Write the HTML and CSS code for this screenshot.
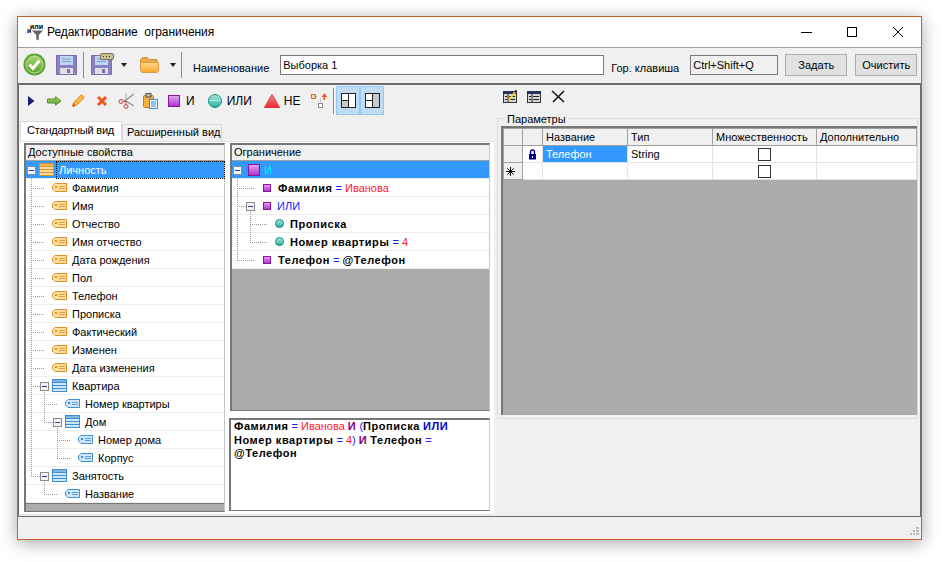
FILE: index.html
```html
<!DOCTYPE html>
<html lang="ru">
<head>
  <meta charset="UTF-8">
  <title>Редактирование ограничения</title>
  <link rel="stylesheet" href="styles.css">
</head>
<body>
<svg class="defs" width="0" height="0">
  <defs>
    <linearGradient id="gPurple" x1="0" y1="0" x2="0" y2="1"><stop offset="0" stop-color="#e6a6f2"/><stop offset="1" stop-color="#a92fd0"/></linearGradient>
    <linearGradient id="gTeal" x1="0" y1="0" x2="0" y2="1"><stop offset="0" stop-color="#a9e6da"/><stop offset=".5" stop-color="#6ccfc0"/><stop offset="1" stop-color="#27a89b"/></linearGradient>
    <linearGradient id="gRed" x1="0" y1="0" x2="0" y2="1"><stop offset="0" stop-color="#f7888c"/><stop offset="1" stop-color="#ee2a33"/></linearGradient>
    <linearGradient id="gGreen" x1="0" y1="0" x2="0" y2="1"><stop offset="0" stop-color="#a5d56a"/><stop offset="1" stop-color="#5da52f"/></linearGradient>
    <linearGradient id="gFolder" x1="0" y1="0" x2="0" y2="1"><stop offset="0" stop-color="#ffd98a"/><stop offset="1" stop-color="#f7a530"/></linearGradient>
    <symbol id="expander" viewBox="0 0 9 9"><rect x=".5" y=".5" width="8" height="8" fill="#f2f2f2" stroke="#8c8c8c"/><path d="M2 4.5h5" stroke="#23408f" fill="none"/></symbol>
    <symbol id="tableIcon" viewBox="0 0 15 13"><rect x=".5" y=".5" width="14" height="12" stroke="currentColor"/><path d="M1 3.5h13M1 6.5h13M1 9.5h13" stroke="currentColor" fill="none"/><rect x="1" y="1" width="13" height="2" fill="currentColor" opacity=".55"/></symbol>
    <symbol id="tagIcon" viewBox="0 0 15 9"><path d="M3 .5h11.5v8H3L.5 6V3z" stroke="currentColor"/><rect x="3" y="3" width="2" height="2" fill="currentColor"/><path d="M7 3.5h6M7 5.5h6" stroke="currentColor" opacity=".8" fill="none"/></symbol>
    <symbol id="squareSmall" viewBox="0 0 8 8"><rect x=".5" y=".5" width="7" height="7" fill="url(#gPurple)" stroke="#8d1398"/></symbol>
    <symbol id="squareBig" viewBox="0 0 12 12"><rect x=".5" y=".5" width="11" height="11" fill="url(#gPurple)" stroke="#8d1398"/></symbol>
    <symbol id="circleSmall" viewBox="0 0 9 9"><circle cx="4.5" cy="4.5" r="4" fill="url(#gTeal)" stroke="#178a80"/></symbol>
    <symbol id="floppy" viewBox="0 0 21 20"><path d="M.5.5h20v19H.5z" fill="#8b80c2" stroke="#7a6eb4"/><rect x="4" y="1" width="13" height="9" fill="#bcd6ef"/><path d="M6 4h9M6 6.5h9" stroke="#7f9fce" fill="none"/><rect x="4" y="13" width="13" height="6" fill="#e0e0e4"/><rect x="11" y="14" width="3" height="4" fill="#7a6eb4"/></symbol>
    <symbol id="paneIcon" viewBox="0 0 15 15"><rect x=".5" y=".5" width="14" height="14" fill="#fff" stroke="#222"/><path d="M7.5 1v13" stroke="#222" fill="none"/></symbol>
    <symbol id="gridIcon" viewBox="0 0 14 12"><rect x=".5" y=".5" width="13" height="11" fill="#d6d6d6" stroke="#333"/><rect x="0" y="0" width="14" height="3" fill="#27305e"/><path d="M2 5.5h2M2 8.5h2M6 5.5h6M6 8.5h6M5 3v8" stroke="#222" fill="none"/></symbol>
  </defs>
</svg>

<div class="window">
  <div class="titlebar">
    <svg class="title-icon" width="17" height="17" viewBox="0 0 17 17">
      <text x="3" y="5" class="tiny">или</text>
      <text x="0" y="9" class="tiny">и</text>
      <path d="M5 6.500h11l-4.200 4.500v5.500l-2.600-1.200V11z" fill="#666"/>
    </svg>
    <span class="title-text">Редактирование&nbsp; ограничения</span>
    <div class="win-buttons">
      <svg width="12" height="12" viewBox="0 0 12 12"><path d="M1 6.5h11" stroke="#000"/></svg>
      <svg width="12" height="12" viewBox="0 0 12 12"><rect x="1.5" y="1.5" width="9" height="9" fill="none" stroke="#000"/></svg>
      <svg width="12" height="12" viewBox="0 0 12 12"><path d="M1 1l10 10M11 1L1 11" stroke="#000" fill="none"/></svg>
    </div>
  </div>

  <div class="topbar">
    <svg class="ok-icon" width="23" height="23" viewBox="0 0 23 23"><circle cx="11.5" cy="11.5" r="11" fill="#5aa232"/><circle cx="11.5" cy="11.5" r="8.5" fill="url(#gGreen)" stroke="#c4dfa0"/><path d="M6.5 11.5l3.5 4 6.5-8" stroke="#fff" stroke-width="3" fill="none"/></svg>
    <svg class="save-icon" width="21" height="20"><use href="#floppy"/></svg>
    <i class="sep"></i>
    <span class="saveas">
      <svg width="21" height="20"><use href="#floppy"/></svg>
      <svg class="bubble" width="14" height="7" viewBox="0 0 14 7"><rect x=".5" y=".5" width="13" height="6" rx="1.5" fill="#cdbf92" stroke="#77705a"/><path d="M3 3.5h1M6 3.5h1M9 3.5h1" stroke="#333"/></svg>
    </span>
    <i class="caret"></i>
    <svg class="folder" width="19" height="16" viewBox="0 0 19 16"><path d="M.5 2.5l2-2h5l1.5 2h8v3H.5z" fill="#e9a94c" stroke="#cf9137"/><path d="M.5 5.5h18v8l-1.5 2H2l-1.5-2z" fill="url(#gFolder)" stroke="#d99a3d"/></svg>
    <i class="caret caret-2"></i>
    <i class="sep sep-2"></i>
    <span class="lbl name-lbl">Наименование</span>
    <div class="field name-field">Выборка 1</div>
    <span class="lbl key-lbl">Гор. клавиша</span>
    <div class="field key-field">Ctrl+Shift+Q</div>
    <button class="btn">Задать</button>
    <button class="btn btn-clear">Очистить</button>
  </div>

  <div class="main">
    <div class="left">
      <div class="left-tools">
        <svg class="t1" width="7" height="10" viewBox="0 0 7 10"><path d="M0 0l6.5 5L0 10z" fill="#1b1b78"/></svg>
        <svg class="t2" width="15" height="10" viewBox="0 0 15 10"><path d="M.5 3h8V.8L14 5 8.500 9.200V7h-8z" fill="url(#gGreen)" stroke="#4c8a2b"/></svg>
        <svg class="t3" width="13" height="13" viewBox="0 0 13 13"><path d="M9.500.7l2.800 2.800-8 8-3.800 1 1-3.800z" fill="#f6b548" stroke="#dc8a22"/><path d="M.5 12.500l1-3 2 2z" fill="#c74d24"/></svg>
        <svg class="t4" width="12" height="12" viewBox="0 0 12 12"><path d="M2 2l8 8M10 2l-8 8" stroke="#f0541e" stroke-width="3" fill="none"/></svg>
        <svg class="t5" width="16" height="16" viewBox="0 0 16 16"><path d="M16 1L6 8.500M16 13L6 7" stroke="#8d8d8d" stroke-width="1.200" fill="none"/><path d="M8 0v7" stroke="#aaa" fill="none"/><circle cx="3" cy="8.500" r="2" fill="none" stroke="#d23a42"/><circle cx="8" cy="13.500" r="2" fill="none" stroke="#d23a42"/><path d="M5 8.500h3v3" stroke="#d23a42" fill="none"/></svg>
        <svg class="t6" width="15" height="16" viewBox="0 0 15 16"><rect x=".5" y="2.500" width="10" height="12" rx="1" fill="#f5b042" stroke="#bb7c2a"/><rect x="3" y=".5" width="5" height="3.500" fill="#bbb" stroke="#555"/><rect x="6.500" y="6.500" width="8" height="9" fill="#e9f3fc" stroke="#3f8fd0"/><path d="M8 9h5M8 11h5M8 13h5" stroke="#3f8fd0" fill="none"/></svg>
        <svg class="t7" width="12" height="12"><use href="#squareBig"/></svg>
        <span class="tool-lbl lbl-and">И</span>
        <svg class="t8" width="14" height="14" viewBox="0 0 14 14"><circle cx="7" cy="7" r="6.500" fill="url(#gTeal)" stroke="#1d8f85"/><path d="M1 6.500h12" stroke="#e6fbf6" opacity=".6" fill="none"/></svg>
        <span class="tool-lbl lbl-or">ИЛИ</span>
        <svg class="t9" width="16" height="14" viewBox="0 0 16 14"><path d="M8 .5L15.500 13.500H.5z" fill="url(#gRed)" stroke="#e0353b"/></svg>
        <span class="tool-lbl lbl-not">НЕ</span>
        <svg class="t10" width="16" height="16" viewBox="0 0 16 16"><rect x=".5" y="1.500" width="4" height="4" fill="#fbd2a0" stroke="#c9722c"/><rect x="7.500" y="10.500" width="4" height="4" fill="#fff" stroke="#888"/><path d="M5 3.500h2M9.500 6v4" stroke="#999" stroke-dasharray="1 1" fill="none"/><path d="M12.500 7V4H10.500l3-4 2.500 4H14v3z" fill="#e9591e"/></svg>
        <i class="sep sep-3"></i>
        <span class="toggle">
          <svg width="15" height="15"><use href="#paneIcon"/><rect x="1" y="8" width="6" height="6" fill="#c8c8c8"/><path d="M1 7.500h6" stroke="#222"/></svg>
        </span>
        <span class="toggle">
          <svg width="15" height="15"><use href="#paneIcon"/><rect x="8" y="1" width="6" height="13" fill="#c8c8c8"/><path d="M1 7.500h6" stroke="#222"/></svg>
        </span>
      </div>

      <div class="tabs">
        <span class="tab active">Стандартный вид</span>
        <span class="tab">Расширенный вид</span>
      </div>

      <div class="tab-page">
        <div class="tree props">
          <div class="tree-head">Доступные свойства</div>
          <div class="rows">
            <div class="row sel lv0"><svg class="ic-o" width="15" height="13"><use href="#tableIcon"/></svg><span class="focus">Личность</span></div>
            <div class="row lv1"><svg class="ic-o" width="15" height="9"><use href="#tagIcon"/></svg><span>Фамилия</span></div>
            <div class="row lv1"><svg class="ic-o" width="15" height="9"><use href="#tagIcon"/></svg><span>Имя</span></div>
            <div class="row lv1"><svg class="ic-o" width="15" height="9"><use href="#tagIcon"/></svg><span>Отчество</span></div>
            <div class="row lv1"><svg class="ic-o" width="15" height="9"><use href="#tagIcon"/></svg><span>Имя отчество</span></div>
            <div class="row lv1"><svg class="ic-o" width="15" height="9"><use href="#tagIcon"/></svg><span>Дата рождения</span></div>
            <div class="row lv1"><svg class="ic-o" width="15" height="9"><use href="#tagIcon"/></svg><span>Пол</span></div>
            <div class="row lv1"><svg class="ic-o" width="15" height="9"><use href="#tagIcon"/></svg><span>Телефон</span></div>
            <div class="row lv1"><svg class="ic-o" width="15" height="9"><use href="#tagIcon"/></svg><span>Прописка</span></div>
            <div class="row lv1"><svg class="ic-o" width="15" height="9"><use href="#tagIcon"/></svg><span>Фактический</span></div>
            <div class="row lv1"><svg class="ic-o" width="15" height="9"><use href="#tagIcon"/></svg><span>Изменен</span></div>
            <div class="row lv1"><svg class="ic-o" width="15" height="9"><use href="#tagIcon"/></svg><span>Дата изменения</span></div>
            <div class="row lv1"><svg class="ic-b" width="15" height="13"><use href="#tableIcon"/></svg><span>Квартира</span></div>
            <div class="row lv2"><svg class="ic-b" width="15" height="9"><use href="#tagIcon"/></svg><span>Номер квартиры</span></div>
            <div class="row lv2"><svg class="ic-b" width="15" height="13"><use href="#tableIcon"/></svg><span>Дом</span></div>
            <div class="row lv3"><svg class="ic-b" width="15" height="9"><use href="#tagIcon"/></svg><span>Номер дома</span></div>
            <div class="row lv3"><svg class="ic-b" width="15" height="9"><use href="#tagIcon"/></svg><span>Корпус</span></div>
            <div class="row lv1"><svg class="ic-b" width="15" height="13"><use href="#tableIcon"/></svg><span>Занятость</span></div>
            <div class="row lv2"><svg class="ic-b" width="15" height="9"><use href="#tagIcon"/></svg><span>Название</span></div>
            <svg class="lines" width="198" height="342">
              <path class="dots" d="M5.500 15V315M5 27.500h13M5 45.500h13M5 63.500h13M5 81.500h13M5 99.500h13M5 117.500h13M5 135.500h13M5 153.500h13M5 171.500h13M5 189.500h13M5 207.500h13M5 225.500h9M5 315.500h9M18.500 229V261M18 243.500h14M18 261.500h9M31.500 265V297M31 279.500h14M31 297.500h14M18.500 319V333M18 333.500h14"/>
              <use href="#expander" x="1" y="5" width="9" height="9"/>
              <use href="#expander" x="14" y="221" width="9" height="9"/>
              <use href="#expander" x="27" y="257" width="9" height="9"/>
              <use href="#expander" x="14" y="311" width="9" height="9"/>
            </svg>
          </div>
          <div class="tree-rest"></div>
        </div>

        <div class="right-col">
          <div class="tree expr">
            <div class="tree-head">Ограничение</div>
            <div class="rows">
              <div class="row sel ex0"><svg width="12" height="12"><use href="#squareBig"/></svg><span class="and">И</span></div>
              <div class="row ex1"><svg width="8" height="8"><use href="#squareSmall"/></svg><span class="pad"><b>Фамилия</b> <em class="eq">=</em> <em class="val">Иванова</em></span></div>
              <div class="row ex1"><svg width="8" height="8"><use href="#squareSmall"/></svg><span class="or">ИЛИ</span></div>
              <div class="row ex2"><svg width="9" height="9"><use href="#circleSmall"/></svg><span><b>Прописка</b></span></div>
              <div class="row ex2"><svg width="9" height="9"><use href="#circleSmall"/></svg><span><b>Номер квартиры</b> <em class="eq">=</em> <em class="val">4</em></span></div>
              <div class="row ex1"><svg width="8" height="8"><use href="#squareSmall"/></svg><span class="pad"><b>Телефон</b> <em class="eq">=</em> <b>@Телефон</b></span></div>
              <svg class="lines" width="257" height="108">
                <path class="dots" d="M5.500 15V99M5 27.500h17M5 45.500h9M5 99.500h18M18.500 49V81M18 63.500h18M18 81.500h18"/>
                <use href="#expander" x="1" y="5" width="9" height="9"/>
                <use href="#expander" x="14" y="41" width="9" height="9"/>
              </svg>
            </div>
            <div class="tree-rest"></div>
          </div>
          <div class="expr-text">
            <b>Фамилия</b> <em class="eq">=</em> <em class="val">Иванова</em> <b class="and-op">И</b> <em class="eq">(</em><b>Прописка</b> <b class="or-op">ИЛИ</b><br>
            <b>Номер квартиры</b> <em class="eq">=</em> <em class="val">4</em><em class="eq">)</em> <b class="and-op">И</b> <b>Телефон</b> <em class="eq">=</em><br>
            <b>@Телефон</b>
          </div>
        </div>
      </div>
    </div>

    <div class="right">
      <div class="right-tools">
        <svg width="14" height="13" viewBox="0 0 14 13"><use href="#gridIcon" width="14" height="12" y="1"/><path d="M6 10L12 2" stroke="#f2d21c" stroke-width="2"/><path d="M12 2l1-2" stroke="#222" stroke-width="1.500"/></svg>
        <svg width="14" height="13" viewBox="0 0 14 13"><use href="#gridIcon" width="14" height="12" y="1"/></svg>
        <svg width="14" height="13" viewBox="0 0 14 13"><path d="M1 1l12 11M13 1L2 12" stroke="#111" stroke-width="1.500" fill="none"/></svg>
      </div>
      <fieldset class="params">
        <legend>Параметры</legend>
        <div class="grid-wrap">
          <table class="grid">
            <colgroup><col class="c-h1"><col class="c-h"><col class="c-name"><col class="c-name"><col class="c-many"><col></colgroup>
            <tr class="head"><th></th><th></th><th>Название</th><th>Тип</th><th>Множественность</th><th>Дополнительно</th></tr>
            <tr>
              <th></th>
              <td class="mid"><svg width="9" height="11" viewBox="0 0 9 11"><path d="M2.500 5V3a2 2 0 0 1 4 0v2" fill="none" stroke="#00007a" stroke-width="1.400"/><rect x="1" y="5" width="7" height="5.500" fill="#00007a"/><rect x="4" y="7" width="1" height="2" fill="#fff"/></svg></td>
              <td class="cur">Телефон</td><td>String</td>
              <td class="mid"><i class="check"></i></td><td></td>
            </tr>
            <tr>
              <th class="star"><svg width="9" height="9" viewBox="0 0 9 9"><path d="M4.500 0v9M0 4.500h9M1.300 1.300l6.400 6.400M7.700 1.300L1.300 7.700" stroke="#111" fill="none"/></svg></th><td></td><td></td><td></td>
              <td class="mid"><i class="check"></i></td><td></td>
            </tr>
          </table>
        </div>
      </fieldset>
    </div>
  </div>

  <div class="statusbar">
    <svg class="grip" width="9" height="9" viewBox="0 0 9 9"><path d="M6 0h3v2H6zM3 3h2v2H3zM6 3h3v2H6zM0 6h2v2H0zM3 6h2v2H3zM6 6h3v2H6z" fill="#b9b9b9"/></svg>
  </div>
</div>
</body>
</html>
```

FILE: styles.css
```css
html, body { margin: 0; padding: 0; background: #fff; }
body { font-family: "Liberation Sans", Arial, sans-serif; font-size: 11px; color: #000; width: 943px; height: 562px; overflow: hidden; }
svg { display: block; flex: none; }
em { font-style: normal; }
b { letter-spacing: .55px; }
.defs { position: absolute; }

.window { box-sizing: border-box; width: 905px; height: 524px; margin: 16px 0 0 17px; background: #f0f0f0; border: 1px solid #c8602e; box-shadow: 0 3px 16px rgba(0,0,0,0.35); display: flex; flex-direction: column; }

.titlebar { height: 30px; background: #fff; display: flex; align-items: center; flex: none; }
.title-icon { margin: 0 0 0 9px; }
.tiny { font-size: 7px; font-weight: bold; }
.title-text { font-size: 12px; margin-left: 3px; letter-spacing: -.05px; }
.win-buttons { margin-left: auto; display: flex; gap: 34px; padding-right: 17px; }

.topbar { height: 36px; box-sizing: border-box; border-top: 1px solid #a0a0a0; padding-bottom: 2px; display: flex; align-items: center; flex: none; }
.ok-icon { margin-left: 5px; }
.save-icon { margin-left: 10px; }
.sep { display: block; width: 1px; background: #8c8c8c; height: 26px; flex: none; }
.topbar > .sep { margin-left: 6px; }
.saveas { display: block; position: relative; margin-left: 7px; }
.bubble { position: absolute; left: 9px; top: -2px; }
.caret { display: block; width: 0; height: 0; border: 3.500px solid transparent; border-top: 4px solid #222; border-bottom: 0; margin-left: 9px; flex: none; }
.folder { margin-left: 13px; }
.topbar > .caret-2 { margin-left: 11px; }
.topbar > .sep-2 { margin-left: 5px; }
.lbl { position: relative; top: 3px; }
.name-lbl { margin-left: 11px; }
.field { box-sizing: border-box; height: 20px; line-height: 18px; border: 1px solid #7a7a7a; background: #fff; padding-left: 2px; }
.name-field { width: 324px; margin-left: 11px; }
.key-lbl { margin-left: 7px; }
.key-field { width: 88px; margin-left: 11px; background: #f0f0f0; }
.btn { box-sizing: border-box; width: 62px; height: 22px; padding: 0; margin-left: 7px; background: #e1e1e1; border: 1px solid #adadad; font: inherit; color: #000; }
.btn-clear { margin-left: 8px; }

.main { box-sizing: border-box; height: 434px; flex: none; border: 1px solid #6b6b6b; border-top-width: 2px; display: flex; background: #f0f0f0; }
.left { width: 478px; flex: none; }
.right { flex: 1; min-width: 0; }

.left-tools { box-sizing: border-box; height: 36px; padding-bottom: 5px; display: flex; align-items: center; }
.t1 { margin-left: 9px; }
.t2 { margin-left: 12px; }
.t3 { margin-left: 10px; }
.t4 { margin-left: 11px; }
.t5 { margin-left: 10px; }
.t6 { margin-left: 9px; }
.t7 { margin-left: 10px; }
.lbl-and { margin-left: 6px; }
.t8 { margin-left: 13px; }
.lbl-or { margin-left: 5px; }
.t9 { margin-left: 12px; }
.lbl-not { margin-left: 4px; }
.t10 { margin-left: 11px; }
.left-tools > .sep-3 { margin: 0 2px 0 6px; }
.toggle { box-sizing: border-box; width: 24px; height: 29px; background: #c0dcf3; border: 1px solid #90c8fb; display: flex; align-items: center; justify-content: center; }
.tool-lbl { font-size: 12px; }

.tabs { height: 20px; display: flex; align-items: flex-end; padding-left: 1px; }
.tab { box-sizing: border-box; height: 17px; line-height: 14px; padding: 0 4px; width: 100px; border: 1px solid #d9d9d9; border-bottom: 0; white-space: nowrap; }
.tab.active { height: 20px; line-height: 16px; width: 102px; background: #fff; padding-left: 6px; letter-spacing: -.2px; }

.tab-page { box-sizing: border-box; height: 374px; margin: 0 3px 0 1px; padding: 1px 2px 3px 4px; background: #fff; border: 1px solid #e0e0e0; border-width: 1px 0 1px 0; display: flex; gap: 4px; }

.tree { box-sizing: border-box; border: 2px solid #777; border-right: 1px solid #c8c8c8; border-bottom: 1px solid #777; display: flex; flex-direction: column; background: #fff; }
.props { width: 201px; height: 369px; }
.tree-head { box-sizing: border-box; height: 16px; line-height: 15px; padding-left: 2px; background: #f0f0f0; border-bottom: 1px solid #a0a0a0; flex: none; }
.rows { position: relative; flex: none; }
.tree-rest { flex: 1; background: #ababab; }
.props .tree-rest { border-top: 1px solid #777; }
.row { box-sizing: border-box; height: 18px; border-bottom: 1px solid #eee; display: flex; align-items: center; gap: 5px; white-space: nowrap; }
.row.sel { background: #3399ff; color: #fff; }
.lv0 { padding-left: 13px; }
.lv1 { padding-left: 26px; }
.lv2 { padding-left: 39px; }
.lv3 { padding-left: 52px; }
.ex0 { padding-left: 16px; gap: 4px; }
.ex1 { padding-left: 31px; gap: 6px; }
.ex2 { padding-left: 43px; gap: 6px; }
.pad { padding-left: 1px; }
.focus { outline: 1px dotted #000; outline-offset: 0; padding: 0 2px; margin-left: -2px; line-height: 16px; flex: 1; }
.lines { position: absolute; left: 0; top: 0; }
.dots { fill: none; stroke: #9a9a9a; stroke-dasharray: 1 1; shape-rendering: crispEdges; }
.ic-o { color: #e08f25; fill: #ffdf9f; }
.ic-b { color: #3f8ed6; fill: #cfe7fb; }

.right-col { width: 261px; display: flex; flex-direction: column; }
.expr { height: 268px; margin-left: 1px; flex: none; }
.expr-text { box-sizing: border-box; height: 93px; margin-top: 7px; padding: 0 0 0 3px; border: 2px solid #777; border-width: 2px 1px 1px 2px; border-right-color: #c8c8c8; line-height: 13.500px; background: #fff; }
.and { color: #00f0ff; }
.or { color: #2020ff; }
.eq { color: #1a1aff; }
.val { color: #ff1a1a; }
.and-op { color: #800080; }
.or-op { color: #0000c8; }

.right-tools { box-sizing: border-box; height: 26px; padding: 0 0 3px 6px; display: flex; align-items: center; gap: 10px; }
.params { box-sizing: border-box; margin: 0; width: 421px; height: 307px; padding: 2px 0 0 3px; border: 1px solid #dcdcdc; position: relative; top: 1px; }
.params legend { padding: 0 2px; margin-left: 4px; line-height: 12px; position: relative; top: 1px; }
.grid-wrap { box-sizing: border-box; width: 416px; height: 289px; background: #ababab; border: 2px solid #777; border-width: 2px 0 0 2px; }
.grid { border-collapse: collapse; table-layout: fixed; width: 414px; background: #fff; }
.c-h1 { width: 19px; }
.c-h { width: 20px; }
.c-name { width: 85px; }
.c-many { width: 104px; }
.grid th { background: #f0f0f0; font-weight: normal; text-align: left; border: 1px solid #a0a0a0; padding: 0 3px; }
.grid td { border: 1px solid #e4e4e4; padding: 0 3px; height: 16px; }
.grid .head th { height: 16px; line-height: 14px; }
.grid .cur { background: #3399ff; color: #fff; }
.grid .mid svg, .grid .mid .check { margin: 0 auto; }
.grid td.mid { padding: 0; }
.check { display: block; box-sizing: border-box; width: 13px; height: 13px; border: 1px solid #333; background: #fff; }
.grid .star { padding: 0 0 0 2px; }

.statusbar { flex: 1; position: relative; }
.grip { position: absolute; right: 2px; bottom: 3px; }
```
